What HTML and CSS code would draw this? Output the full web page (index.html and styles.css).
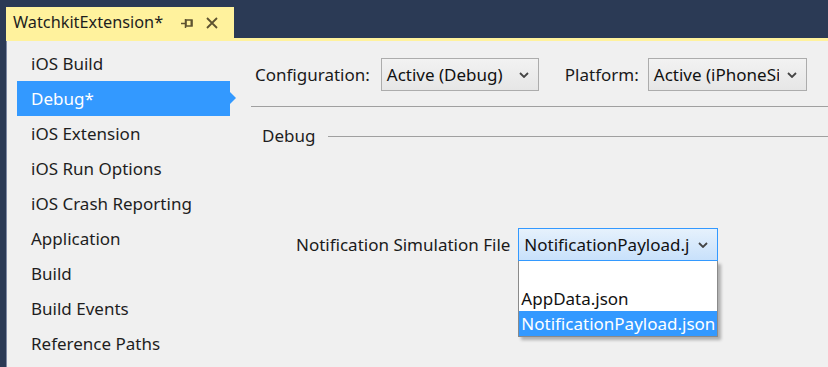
FILE: index.html
```html
<!DOCTYPE html>
<html>
<head>
<meta charset="utf-8">
<link rel="stylesheet" href="styles.css">
</head>
<body>
<div class="app">
  <div class="tabbar">
    <div class="tab">
      <span class="tab-title">WatchkitExtension*</span>
      <svg class="pin" width="12" height="10" viewBox="0 0 12 10">
        <path d="M0 5.5H4" stroke="#5e5330" stroke-width="1.5" fill="none"/>
        <path d="M4.5 1V10" stroke="#5e5330" stroke-width="1.5" fill="none"/>
        <rect x="5" y="2" width="6" height="6" fill="none" stroke="#5e5330" stroke-width="1.5"/>
        <rect x="9.5" y="2" width="1.8" height="6" fill="#5e5330"/>
      </svg>
      <svg class="close" width="12" height="12" viewBox="0 0 12 12">
        <path d="M1 1L11 11M11 1L1 11" stroke="#5e5330" stroke-width="1.8" fill="none"/>
      </svg>
    </div>
  </div>
  <div class="strip"></div>
  <div class="main">
    <nav class="sidebar">
      <div class="item">iOS Build</div>
      <div class="item selected">Debug*</div>
      <div class="item">iOS Extension</div>
      <div class="item">iOS Run Options</div>
      <div class="item">iOS Crash Reporting</div>
      <div class="item">Application</div>
      <div class="item">Build</div>
      <div class="item">Build Events</div>
      <div class="item">Reference Paths</div>
    </nav>
    <section class="content">
      <div class="toprow">
        <span class="label">Configuration:</span>
        <div class="select config">
          <span class="value">Active (Debug)</span>
          <svg class="chev" width="10" height="6" viewBox="0 0 10 6"><path d="M1 1L5 5L9 1" stroke="#444" stroke-width="1.8" fill="none"/></svg>
        </div>
        <span class="label platform-label">Platform:</span>
        <div class="select platform">
          <span class="value">Active (iPhoneSimulator)</span>
          <svg class="chev" width="10" height="6" viewBox="0 0 10 6"><path d="M1 1L5 5L9 1" stroke="#444" stroke-width="1.8" fill="none"/></svg>
        </div>
      </div>
      <div class="rule"></div>
      <div class="group">
        <span class="group-title">Debug</span>
        <div class="group-line"></div>
      </div>
      <div class="formrow">
        <span class="label notif-label">Notification Simulation File</span>
        <div class="combo">
          <div class="select open">
            <span class="value">NotificationPayload.json</span>
            <svg class="chev" width="10" height="6" viewBox="0 0 10 6"><path d="M1 1L5 5L9 1" stroke="#444" stroke-width="1.8" fill="none"/></svg>
          </div>
          <div class="dropdown">
            <div class="opt"></div>
            <div class="opt">AppData.json</div>
            <div class="opt hl">NotificationPayload.json</div>
          </div>
        </div>
      </div>
    </section>
  </div>
</div>
</body>
</html>
```
FILE: styles.css
```css
html, body {
  margin: 0;
  padding: 0;
}
body {
  background: #2b3a55;
  font-family: "Noto Sans", "Open Sans", sans-serif;
  font-size: 17px;
  color: #1e1e1e;
  width: 828px;
  height: 367px;
  overflow: hidden;
}
.app {
  display: flex;
  flex-direction: column;
  height: 367px;
}
.tabbar {
  height: 31px;
  padding-top: 7px;
  padding-left: 6px;
  display: flex;
}
.tab {
  width: 221px;
  height: 31px;
  background: #fff29d;
  display: flex;
  align-items: center;
  padding-left: 7px;
  box-sizing: content-box;
}
.tab-title {
  font-size: 16.3px;
  color: #1e1e1e;
  line-height: 31px;
}
.pin {
  margin-left: 18px;
  margin-top: 1px;
}
.close {
  margin-left: 13px;
}
.strip {
  height: 3px;
  margin-left: 6px;
  background: #fff29d;
}
.main {
  flex: 1;
  display: flex;
  margin-left: 6px;
  border-left: 1px solid #7f8aa3;
  background: #f0f0f0;
  position: relative;
}
.sidebar {
  width: 230px;
  padding-top: 5px;
  display: flex;
  flex-direction: column;
}
.item {
  height: 35px;
  line-height: 36px;
  margin-left: 10px;
  width: 199px;
  padding-left: 14px;
  position: relative;
  white-space: nowrap;
}
.item.selected {
  background: #3399ff;
  color: #fff;
}
.item.selected::after {
  content: "";
  position: absolute;
  right: -6px;
  top: 11px;
  border-top: 6px solid transparent;
  border-bottom: 6px solid transparent;
  border-left: 6px solid #3399ff;
}
.content {
  flex: 1;
  display: flex;
  flex-direction: column;
  padding-left: 14px;
  padding-top: 17px;
}
.toprow {
  display: flex;
  align-items: center;
  padding-left: 4px;
  height: 33px;
}
.label {
  color: #1a1a1a;
  white-space: nowrap;
}
.select {
  box-sizing: border-box;
  height: 33px;
  border: 1px solid #acacac;
  background: linear-gradient(#f2f2f2, #e6e6e6);
  display: flex;
  align-items: center;
  position: relative;
  overflow: hidden;
}
.select .value {
  padding-left: 5px;
  white-space: nowrap;
  overflow: hidden;
  flex: 1;
  color: #111;
}
.chev {
  flex: none;
  margin: 0 9px 0 8px;
}
.config {
  width: 158px;
  margin-left: 11px;
}
.platform-label {
  margin-left: 26px;
}
.platform {
  width: 159px;
  margin-left: 9px;
}
.rule {
  height: 1px;
  background: #a0a0a0;
  margin-top: 15px;
}
.group {
  display: flex;
  align-items: center;
  margin-top: 15px;
  padding-left: 11px;
  height: 26px;
}
.group-line {
  flex: 1;
  height: 1px;
  background: #a0a0a0;
  margin-left: 13px;
  margin-top: 2px;
}
.formrow {
  display: flex;
  align-items: center;
  margin-top: 80px;
  padding-left: 45px;
}
.combo {
  position: relative;
  margin-left: 8px;
}
.select.open {
  width: 200px;
  border-color: #3399ff;
  background: linear-gradient(#e6f1fc, #c8e1fb);
}
.dropdown {
  position: absolute;
  left: 0;
  top: 33px;
  width: 200px;
  box-sizing: border-box;
  background: #fff;
  border: 1px solid #8a8a8a;
  border-top: none;
  box-shadow: 3px 3px 3px rgba(0, 0, 0, 0.28);
}
.opt {
  height: 25px;
  line-height: 25px;
  padding-left: 2px;
  white-space: nowrap;
  color: #111;
  overflow: hidden;
}
.opt.hl {
  background: #3399ff;
  color: #fff;
}
```
